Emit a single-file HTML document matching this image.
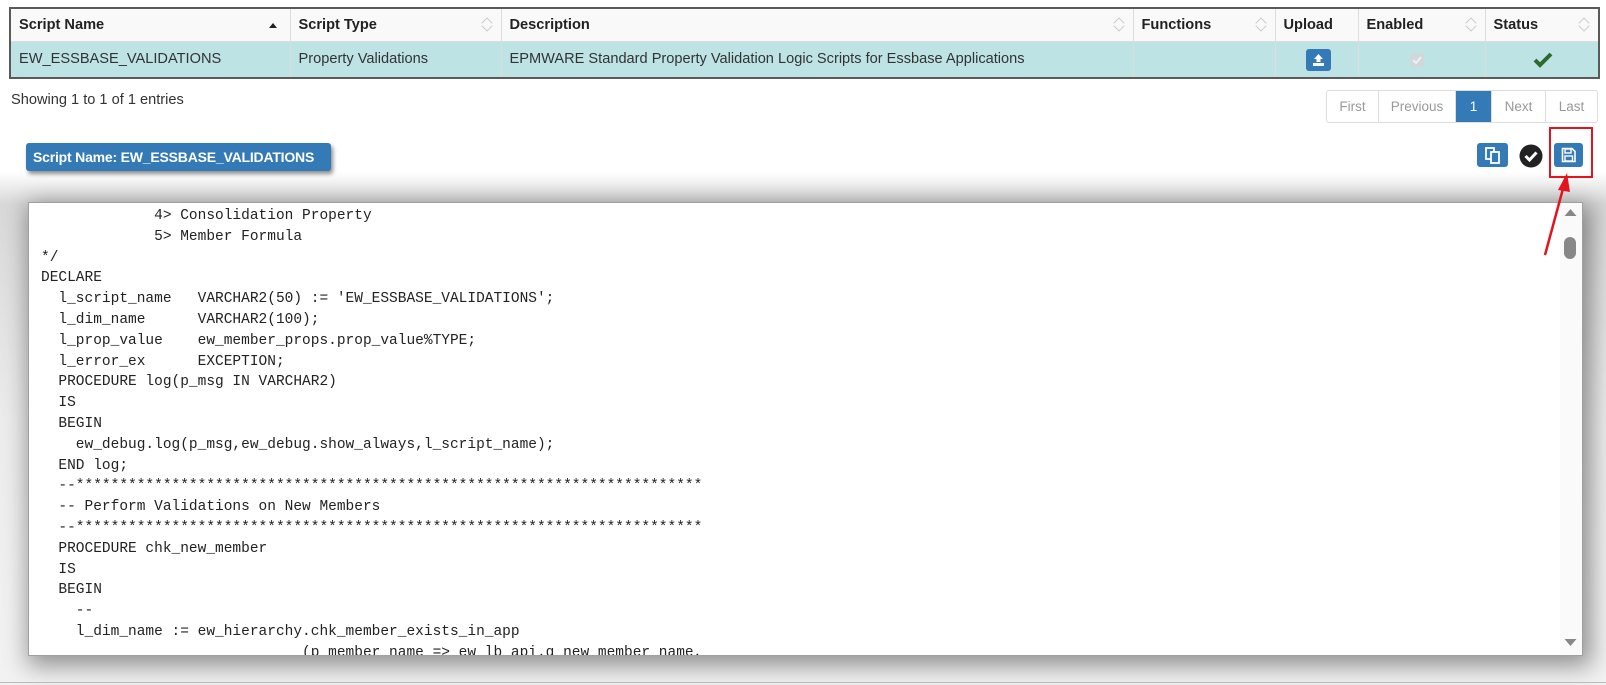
<!DOCTYPE html>
<html><head><meta charset="utf-8"><style>
*{box-sizing:border-box;margin:0;padding:0}
html,body{width:1606px;height:685px;overflow:hidden}
body{font-family:"Liberation Sans",sans-serif;font-size:14px;color:#333;position:relative;
background:linear-gradient(to bottom,#fff 0,#fff 172px,#d8d8d8 204px,#ececec 420px,#f2f2f2 685px)}
table{position:absolute;left:9px;top:7px;width:1589px;border-collapse:collapse;border:2px solid #5a5a5a;table-layout:fixed}
td,th{border:1px solid #ddd;padding:0 8px;text-align:left;white-space:nowrap;position:relative;font-size:14.6px}
th{height:33px;background:#f9f9f9;font-weight:bold;color:#222}
td{height:37px;background:#bde3e4;color:#333}
.s:after{content:"";position:absolute;right:10px;top:10px;width:7px;height:7px;border-left:1px solid #ccc;border-top:1px solid #ccc;transform:rotate(45deg)}
.s:before{content:"";position:absolute;right:10px;bottom:11px;width:7px;height:7px;border-right:1px solid #ccc;border-bottom:1px solid #ccc;transform:rotate(45deg)}
.up:after{content:"";position:absolute;right:13px;top:14px;border:4px solid transparent;border-bottom:5px solid #222;border-top:0}
.show{position:absolute;left:11px;top:92px;font-size:14.6px}
.pg{position:absolute;left:1326px;top:90px;height:33px;display:flex;border:1px solid #ddd;border-radius:3px;background:#fff}
.pg div{height:31px;line-height:31px;text-align:center;color:#999;border-left:1px solid #ddd;font-size:13.5px}
.pg div:first-child{border-left:0}
.pg .a{background:#337ab7;color:#fff}
.lbl{position:absolute;left:26px;top:143px;width:305px;height:28px;background:#337ab7;color:#fff;font-weight:bold;font-size:14px;letter-spacing:-0.2px;white-space:nowrap;line-height:28px;padding-left:7px;border-radius:3px;box-shadow:2px 3px 4px rgba(0,0,0,.45)}
.btn{position:absolute;background:#337ab7;border-radius:3px}
.code{position:absolute;left:28px;top:202px;width:1555px;height:454px;background:#fff;border:1px solid #a0a0a0;box-shadow:4px 6px 22px 4px rgba(0,0,0,.4);overflow:hidden}
pre{font-family:"Liberation Mono","Courier New",monospace;font-size:14.5px;line-height:20.8px;color:#222;padding:3px 0 0 12px;letter-spacing:0}
.sb{position:absolute;right:0;top:0;width:22px;height:100%;background:#fafafa}
</style></head><body>
<table>
<colgroup><col style="width:280px"><col style="width:211px"><col style="width:632px"><col style="width:142px"><col style="width:83px"><col style="width:127px"><col style="width:114px"></colgroup>
<tr><th class="up">Script Name</th><th class="s">Script Type</th><th class="s">Description</th><th class="s">Functions</th><th>Upload</th><th class="s">Enabled</th><th class="s">Status</th></tr>
<tr><td>EW_ESSBASE_VALIDATIONS</td><td>Property Validations</td><td>EPMWARE Standard Property Validation Logic Scripts for Essbase Applications</td><td></td>
<td><div style="position:absolute;left:30px;top:7px;width:25px;height:22px;background:#337ab7;border-radius:3px"><svg width="25" height="22" viewBox="0 0 25 22"><path d="M12.5 5 L17 10 H14.5 V13 H10.5 V10 H8 Z" fill="#fff"/><rect x="7" y="14" width="11" height="3" fill="#fff"/></svg></div></td>
<td><div style="position:absolute;left:51px;top:11px;width:14px;height:14px;background:#d0d8d8;border-radius:2px"><svg width="14" height="14"><path d="M3 7 L6 10 L11 4" stroke="#eef" stroke-width="2" fill="none"/></svg></div></td>
<td><svg style="position:absolute;left:47px;top:10px" width="20" height="16"><path d="M2 8 L7 13 L18 2" stroke="#2d6a2d" stroke-width="4" fill="none"/></svg></td></tr>
</table>
<div class="show">Showing 1 to 1 of 1 entries</div>
<div class="pg"><div style="width:51px;border-left:0">First</div><div style="width:77px">Previous</div><div class="a" style="width:36px">1</div><div style="width:54px">Next</div><div style="width:52px">Last</div></div>
<div class="lbl">Script Name: EW_ESSBASE_VALIDATIONS</div>
<div class="btn" style="left:1477px;top:143px;width:31px;height:24px"><svg width="31" height="24"><rect x="9" y="5" width="8" height="11" fill="none" stroke="#fff" stroke-width="1.8"/><rect x="14" y="9" width="8" height="11" fill="#337ab7" stroke="#fff" stroke-width="1.8"/></svg></div>
<svg style="position:absolute;left:1519px;top:144px" width="24" height="24"><circle cx="12" cy="12" r="11.5" fill="#222"/><path d="M6.5 12 L10.5 16 L17.5 8.5" stroke="#fff" stroke-width="3" fill="none"/></svg>
<div class="btn" style="left:1554px;top:143px;width:29px;height:24px"><svg width="29" height="24"><path d="M8.5 5.5 H18 L21 8.5 V18.5 H8.5 Z" fill="none" stroke="#fff" stroke-width="1.6"/><rect x="11" y="6" width="6" height="4" fill="none" stroke="#fff" stroke-width="1.4"/><rect x="11" y="13" width="7.5" height="5" fill="none" stroke="#fff" stroke-width="1.4"/></svg></div>
<div style="position:absolute;left:1549px;top:127px;width:44px;height:51px;border:2px solid #e2141c"></div>
<div class="code"><pre>             4&gt; Consolidation Property
             5&gt; Member Formula
*/
DECLARE
  l_script_name   VARCHAR2(50) := 'EW_ESSBASE_VALIDATIONS';
  l_dim_name      VARCHAR2(100);
  l_prop_value    ew_member_props.prop_value%TYPE;
  l_error_ex      EXCEPTION;
  PROCEDURE log(p_msg IN VARCHAR2)
  IS
  BEGIN
    ew_debug.log(p_msg,ew_debug.show_always,l_script_name);
  END log;
  --************************************************************************
  -- Perform Validations on New Members
  --************************************************************************
  PROCEDURE chk_new_member
  IS
  BEGIN
    --
    l_dim_name := ew_hierarchy.chk_member_exists_in_app
                              (p_member_name =&gt; ew_lb_api.g_new_member_name,</pre>
<div class="sb"><svg width="22" height="454"><path d="M4.5 13 L10.5 6 L16.5 13 Z" fill="#888"/><rect x="4" y="34" width="12" height="22" rx="6" fill="#888"/><path d="M4.5 436 L10.5 443 L16.5 436 Z" fill="#888"/></svg></div>
</div>
<svg style="position:absolute;left:0;top:0" width="1606" height="685"><line x1="1545" y1="255" x2="1564" y2="185" stroke="#e2141c" stroke-width="2.5"/><path d="M1567 173 L1558 190 L1570 192 Z" fill="#e2141c"/><line x1="0" y1="682.5" x2="1606" y2="682.5" stroke="#bbb"/></svg>
</body></html>
